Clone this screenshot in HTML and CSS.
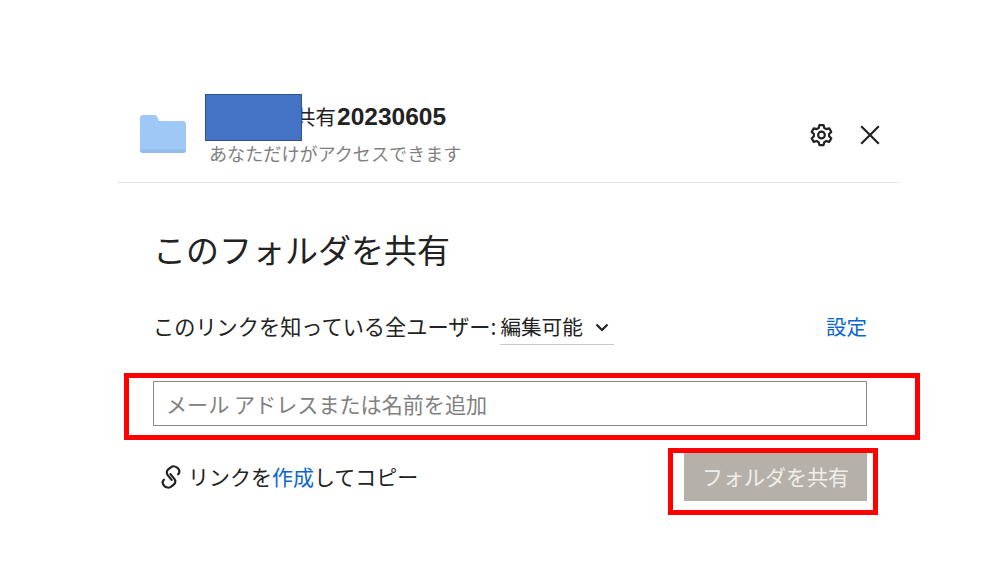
FILE: index.html
```html
<!DOCTYPE html>
<html lang="ja">
<head>
<meta charset="utf-8">
<title>このフォルダを共有</title>
<link rel="stylesheet" href="styles.css">
</head>
<body>
<main class="dialog">
  <header class="head">
    <svg class="folder" viewBox="0 0 46 38" aria-hidden="true"><path d="M3 0h11c1.500 0 2.600.6 3.200 1.800L19 6h24c1.700 0 3 1.300 3 3v26c0 1.700-1.300 3-3 3H3c-1.700 0-3-1.300-3-3V3c0-1.700 1.300-3 3-3z" fill="#a0c8f6"/><path d="M0 35c0 1.700 1.300 3 3 3h40c1.700 0 3-1.300 3-3v-.5H0z" fill="#93bbec"/></svg>
    <div class="names">
      <div class="title"><span class="cjk">共有</span><b class="digits">20230605</b></div>
      <div class="sub">あなただけがアクセスできます</div>
    </div>
    <div class="tools">
      <svg class="gear" viewBox="0 0 24 24" aria-hidden="true"><path d="M10 2.500h4l.7 2.800 1.900 1.100 2.800-.8 2 3.400-2.100 2 0 2.200 2.100 2-2 3.400-2.800-.8-1.900 1.100-.7 2.800h-4l-.7-2.800-1.900-1.100-2.800.8-2-3.400 2.100-2 0-2.200-2.100-2 2-3.400 2.800.8 1.900-1.100z" fill="none" stroke="#222" stroke-width="2.100" stroke-linejoin="round"/><circle cx="12" cy="12" r="3.200" fill="none" stroke="#222" stroke-width="2.100"/></svg>
      <svg class="close" viewBox="0 0 20 20" aria-hidden="true"><path d="M2 2l16 16M18 2L2 18" stroke="#222" stroke-width="2" fill="none"/></svg>
    </div>
  </header>
  <section class="body">
    <h1 class="heading">このフォルダを共有</h1>
    <div class="perm-row">
      <div class="perm">
        <span>このリンクを知っている全ユーザー:</span>
        <span class="select">編集可能
          <svg class="chev" viewBox="0 0 14 9" aria-hidden="true"><path d="M1.500 1.500L7 7l5.500-5.500" fill="none" stroke="#222" stroke-width="2.200"/></svg>
        </span>
      </div>
      <a class="link settings" href="#">設定</a>
    </div>
    <input class="email" type="text" placeholder="メール アドレスまたは名前を追加">
    <div class="foot">
      <div class="copy">
        <svg class="chain" viewBox="-1 0 20 26" aria-hidden="true"><g transform="rotate(20 9 13)" fill="none" stroke="#222" stroke-width="2.200" stroke-linecap="round"><path d="M10.500 15.500L5.500 12.500C3 11 2.800 8.500 4 6.500L5.500 4C7 1.800 10 1.200 12.500 2.500C14.800 3.800 15.700 6 14.800 8"/><path d="M7.500 10.500L12.500 13.500C15 15 15.200 17.500 14 19.500L12.500 22C11 24.200 8 24.800 5.500 23.500C3.200 22.200 2.300 20 3.200 18"/></g></svg>
        <span class="copy-text">リンクを<a class="link" href="#">作成</a>してコピー</span>
      </div>
      <button class="share" type="button" disabled>フォルダを共有</button>
    </div>
  </section>
</main>
<div class="mask"></div>
<div class="mark mark-input"></div>
<div class="mark mark-button"></div>
</body>
</html>
```
FILE: styles.css
```css
* { box-sizing: border-box; }
html, body { margin: 0; height: 100%; }
body {
  position: relative;
  background: #fff;
  overflow: hidden;
  color: #222;
  font-family: "Noto Sans CJK JP", "Liberation Sans", sans-serif;
}
.dialog { width: 783px; margin-left: 117px; padding-top: 93px; }
.head {
  height: 90px;
  padding-left: 23px;
  padding-right: 19px;
  border-bottom: 1px solid #e8e8e8;
  display: flex;
  align-items: flex-start;
}
.folder { width: 46px; height: 38px; margin-top: 22px; flex: none; }
.names { margin-left: 23px; flex: 1; }
.title { height: 46px; padding-left: 86px; display: flex; align-items: center; }
.cjk { font-size: 20.500px; line-height: 46px; width: 42px; }
.digits { font-family: "Liberation Sans", sans-serif; font-size: 24.500px; font-weight: 700; margin-top: 2px; }
.sub { font-size: 18.100px; line-height: 26px; color: #808080; margin-top: 1px; white-space: nowrap; }
.tools { display: flex; align-items: center; gap: 25px; margin-top: 29px; padding-left: 1px; }
.gear { width: 25px; height: 26px; }
.close { width: 22px; height: 22px; }
.body { padding: 43px 33px 0 36px; }
.heading { margin: 0; font-size: 33px; font-weight: 400; line-height: 46px; white-space: nowrap; }
.perm-row {
  margin-top: 33px;
  height: 40px;
  display: flex;
  justify-content: space-between;
  align-items: flex-start;
  font-size: 20.500px;
}
.perm { display: flex; gap: 5px; white-space: nowrap; line-height: 42px; font-size: 21.200px; }
.select { width: 114px; height: 40px; border-bottom: 1px solid #c8c8c8; display: flex; align-items: flex-start; gap: 12px; font-size: 20.600px; margin-left: -1px; }
.chev { width: 14px; height: 9px; margin-top: 18px; flex: none; }
.settings { line-height: 42px; }
.link { color: #0b66d0; text-decoration: none; }
.email {
  display: block;
  width: 714px;
  height: 45px;
  margin-top: 36px;
  padding: 0 12px;
  border: 1px solid #8a8a8a;
  border-radius: 0;
  outline: none;
  font: 21.100px "Noto Sans CJK JP", "Liberation Sans", sans-serif;
}
.email::placeholder { color: #808080; opacity: 1; }
.foot { margin-top: 27px; display: flex; justify-content: space-between; align-items: flex-start; }
.copy { display: flex; align-items: center; gap: 7px; padding-left: 8px; height: 46px; font-size: 21px; white-space: nowrap; }
.chain { width: 20px; height: 26px; flex: none; margin-top: 2px; }
.share {
  width: 183px;
  height: 48px;
  border: 0;
  padding: 0 0 2px;
  background: #b5b1aa;
  color: #f0eeea;
  font: 21px "Noto Sans CJK JP", "Liberation Sans", sans-serif;
}
.mask {
  position: absolute;
  left: 205px;
  top: 94px;
  width: 97px;
  height: 47px;
  background: #4472c4;
  border: 1px solid #2f528f;
}
.mark { position: absolute; border: 5px solid #f00; }
.mark-input { left: 124px; top: 373px; width: 796px; height: 67px; }
.mark-button { left: 668px; top: 448px; width: 210px; height: 67px; }
```
